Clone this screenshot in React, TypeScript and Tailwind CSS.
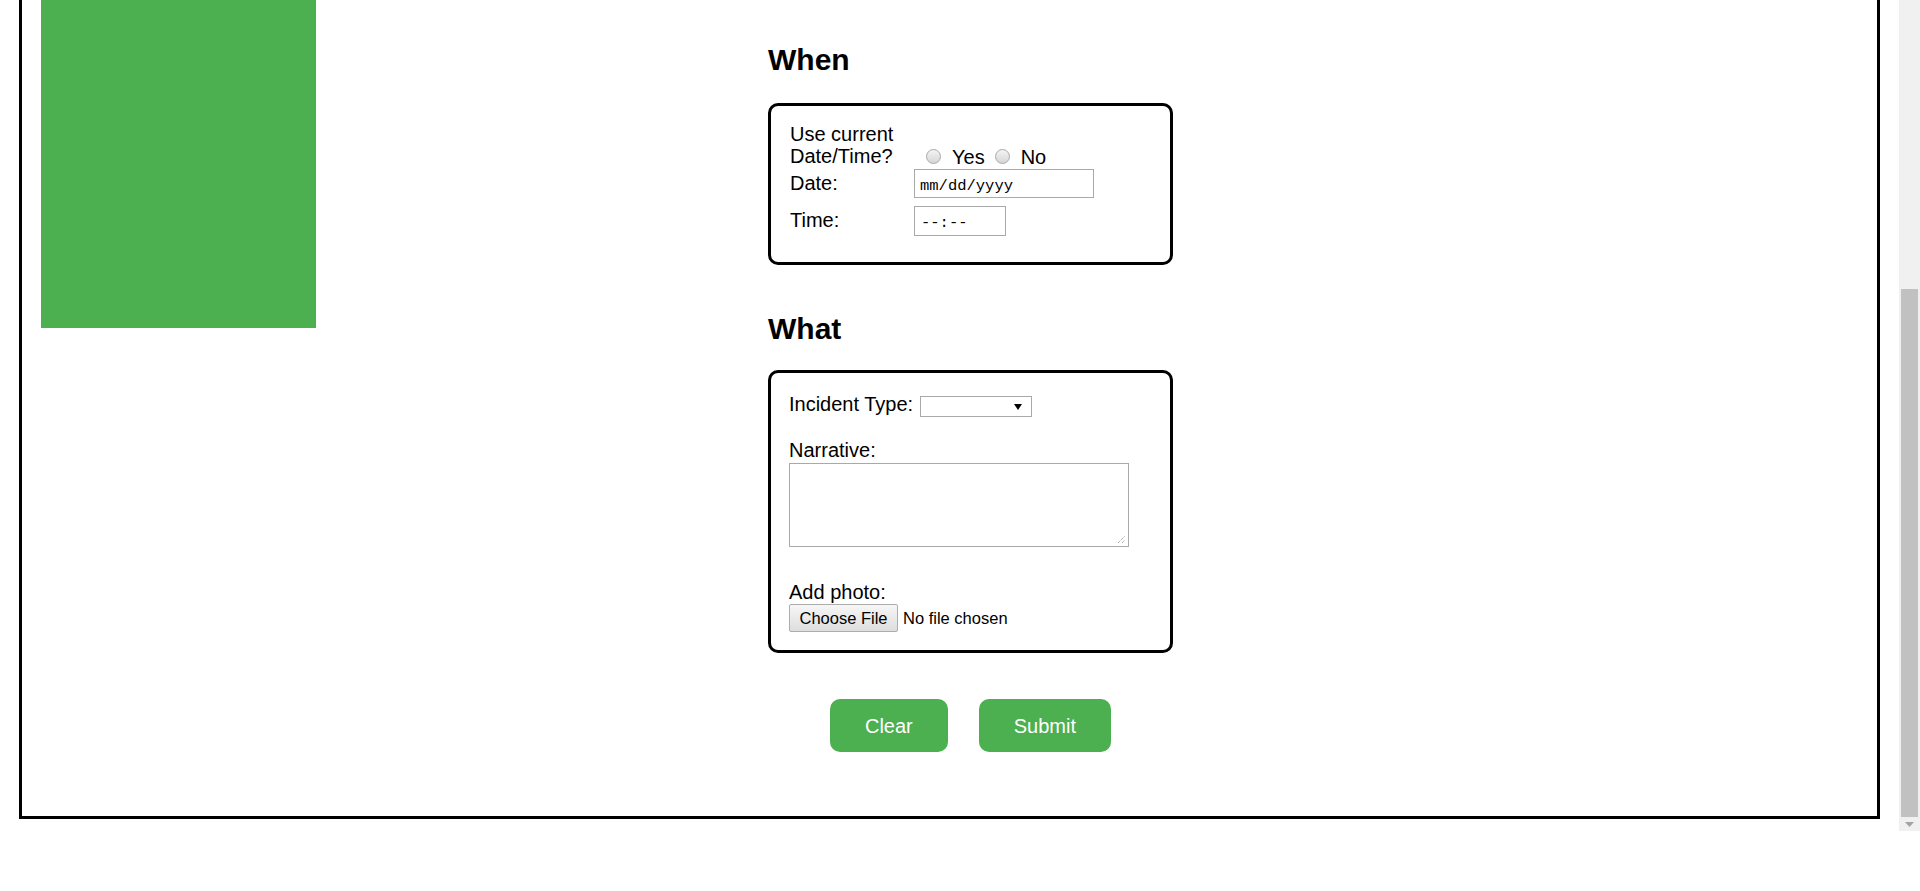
import React from 'react';

const Radio = ({ name }: { name: string }) => (
  <input
    type="radio"
    name={name}
    className="h-[15px] w-[15px] shrink-0 appearance-none rounded-full border border-[#a8a8a8] bg-linear-to-b from-[#f4f4f4] to-[#d6d6d6]"
  />
);

function WhenBox() {
  return (
    <div className="mt-[26px] rounded-[10px] border-[3px] border-black pb-[26px] pl-[19px] pt-[17px]">
      <div className="flex items-end">
        <span className="w-[124px] shrink-0 leading-[22px]">Use current Date/Time?</span>
        <div className="box-border flex h-[22px] items-center pt-[2px] leading-[20px]">
          <span className="ml-[12px]"><Radio name="now" /></span>
          <span className="ml-[11px]">Yes</span>
          <span className="ml-[10px]"><Radio name="now" /></span>
          <span className="ml-[11px]">No</span>
        </div>
      </div>
      <div className="mt-[2px] flex items-baseline">
        <span className="w-[124px] shrink-0 leading-[23px]">Date:</span>
        <div className="h-[29px] w-[180px] border border-[#a9a9a9] pl-[5px] pt-[7px] font-['Liberation_Mono',monospace] text-[15.5px] leading-[18px]">
          mm/dd/yyyy
        </div>
      </div>
      <div className="mt-[8px] flex items-baseline">
        <span className="w-[124px] shrink-0 leading-[23px]">Time:</span>
        <div className="h-[30px] w-[92px] border border-[#a9a9a9] pl-[6px] pt-[7px] font-['Liberation_Mono',monospace] text-[15.5px] leading-[18px]">
          --:--
        </div>
      </div>
    </div>
  );
}

function WhatBox() {
  return (
    <div className="mt-[24px] rounded-[10px] border-[3px] border-black pb-[18px] pl-[18px] pt-[20px]">
      <div className="flex h-[24px] items-start">
        <span className="leading-[23px]">Incident Type:</span>
        <div className="ml-[7px] mt-[3px] flex h-[21px] w-[112px] items-center justify-end border border-[#a9a9a9] bg-white pr-[9px]">
          <svg width="8" height="6" viewBox="0 0 8 6">
            <polygon points="0,0 8,0 4,6" fill="#000" />
          </svg>
        </div>
      </div>
      <div className="mt-[22px] leading-[23px]">Narrative:</div>
      <div className="relative mt-[1px] h-[84px] w-[340px] border border-[#a9a9a9] bg-white">
        <svg className="absolute bottom-[2px] right-[2px]" width="9" height="9" viewBox="0 0 9 9">
          <line x1="1" y1="8" x2="8" y2="1" stroke="#8a8a8a" strokeWidth="1" strokeDasharray="1 1" />
          <line x1="5" y1="8" x2="8" y2="5" stroke="#8a8a8a" strokeWidth="1" strokeDasharray="1 1" />
        </svg>
      </div>
      <div className="mt-[34px] leading-[23px]">Add photo:</div>
      <div className="flex items-center text-[16.5px]">
        <div className="flex h-[28px] w-[109px] items-center justify-center rounded-[2px] border border-[#adadad] bg-linear-to-b from-[#f6f6f6] to-[#dedede]">
          Choose File
        </div>
        <span className="ml-[5px]">No file chosen</span>
      </div>
    </div>
  );
}

export default function App() {
  return (
    <div className="flex h-[891px] w-[1920px] bg-white font-['Liberation_Sans',Arial,sans-serif] text-[20px] text-black">
      <div className="w-[1899px] shrink-0">
        <div className="ml-[19px] flex h-[819px] w-[1861px] items-start border-x-[3px] border-b-[3px] border-black">
          <div className="ml-[19px] h-[328px] w-[275px] shrink-0 bg-[#4caf50]" />
          <div className="ml-[452px] w-[405px] shrink-0">
            <h2 className="mt-[43px] text-[30px] font-bold leading-[34px]">When</h2>
            <WhenBox />
            <h2 className="mt-[47px] text-[30px] font-bold leading-[34px]">What</h2>
            <WhatBox />
            <div className="mt-[46px] flex justify-center gap-[31px]">
              <button className="h-[53px] rounded-[10px] bg-[#4caf50] px-[35px] text-white">Clear</button>
              <button className="h-[53px] rounded-[10px] bg-[#4caf50] px-[35px] text-white">Submit</button>
            </div>
          </div>
        </div>
      </div>
      <div className="flex h-[831px] w-[21px] flex-col bg-[#f0f0f0]">
        <div className="h-[289px]" />
        <div className="mx-[2px] h-[528px] bg-[#c1c1c1]" />
        <div className="flex h-[14px] items-center justify-center">
          <svg width="9" height="5" viewBox="0 0 9 5">
            <polygon points="0,0 9,0 4.5,5" fill="#a3a3a3" />
          </svg>
        </div>
      </div>
    </div>
  );
}
